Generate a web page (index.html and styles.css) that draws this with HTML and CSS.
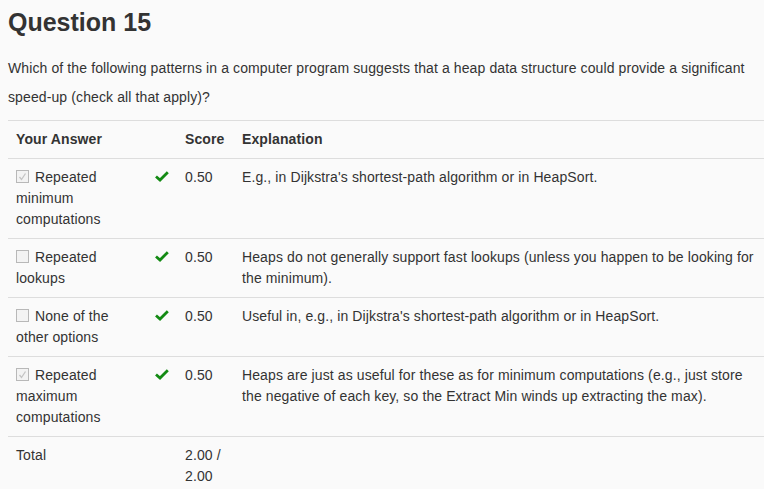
FILE: index.html
```html
<!DOCTYPE html>
<html>
<head>
<meta charset="utf-8">
<link rel="stylesheet" href="styles.css">
</head>
<body>
<div class="page">
  <h2 class="title">Question 15</h2>
  <p class="prompt">Which of the following patterns in a computer program suggests that a heap data structure could provide a significant speed-up (check all that apply)?</p>
  <table class="results">
    <colgroup>
      <col class="c-ans"><col class="c-icon"><col class="c-score"><col class="c-exp">
    </colgroup>
    <thead>
      <tr><th>Your Answer</th><th></th><th>Score</th><th>Explanation</th></tr>
    </thead>
    <tbody>
      <tr>
        <td><span class="box checked"><svg viewBox="0 0 13 13" width="13" height="13"><path d="M3.5 7 L5.5 9.5 L9.5 3.5" fill="none" stroke="#c4c4c4" stroke-width="1.3"/></svg></span>Repeated minimum computations</td>
        <td class="icon"><svg class="ok" viewBox="0 0 14 11" width="14" height="11"><path d="M1 5.5 L5 9 L12.8 1.2" fill="none" stroke="#138a13" stroke-width="2.8"/></svg></td>
        <td>0.50</td>
        <td>E.g., in Dijkstra's shortest-path algorithm or in HeapSort.</td>
      </tr>
      <tr>
        <td><span class="box"></span>Repeated lookups</td>
        <td class="icon"><svg class="ok" viewBox="0 0 14 11" width="14" height="11"><path d="M1 5.5 L5 9 L12.8 1.2" fill="none" stroke="#138a13" stroke-width="2.8"/></svg></td>
        <td>0.50</td>
        <td>Heaps do not generally support fast lookups (unless you happen to be looking for the minimum).</td>
      </tr>
      <tr>
        <td><span class="box"></span>None of the other options</td>
        <td class="icon"><svg class="ok" viewBox="0 0 14 11" width="14" height="11"><path d="M1 5.5 L5 9 L12.8 1.2" fill="none" stroke="#138a13" stroke-width="2.8"/></svg></td>
        <td>0.50</td>
        <td>Useful in, e.g., in Dijkstra's shortest-path algorithm or in HeapSort.</td>
      </tr>
      <tr>
        <td><span class="box checked"><svg viewBox="0 0 13 13" width="13" height="13"><path d="M3.5 7 L5.5 9.5 L9.5 3.5" fill="none" stroke="#c4c4c4" stroke-width="1.3"/></svg></span>Repeated maximum computations</td>
        <td class="icon"><svg class="ok" viewBox="0 0 14 11" width="14" height="11"><path d="M1 5.5 L5 9 L12.8 1.2" fill="none" stroke="#138a13" stroke-width="2.8"/></svg></td>
        <td>0.50</td>
        <td>Heaps are just as useful for these as for minimum computations (e.g., just store the negative of each key, so the Extract Min winds up extracting the max).</td>
      </tr>
      <tr>
        <td>Total</td>
        <td></td>
        <td>2.00 / 2.00</td>
        <td></td>
      </tr>
    </tbody>
  </table>
</div>
</body>
</html>
```
FILE: styles.css
```css
html, body {
  margin: 0;
  padding: 0;
  background: #fafafa;
}
body {
  font-family: "Liberation Sans", Arial, sans-serif;
  font-size: 14px;
  letter-spacing: 0.11px;
  color: #333;
  overflow: hidden;
}
.page {
  padding: 8px 0 0 8px;
}
.title {
  margin: 0 0 17px 0;
  font-size: 25px;
  line-height: 29px;
  font-weight: bold;
  letter-spacing: 0;
  color: #333;
}
.prompt {
  margin: 0 0 8px 0;
  line-height: 29px;
  padding-right: 8px;
}
.results {
  width: 756px;
  table-layout: fixed;
  border-collapse: collapse;
}
.c-ans { width: 139px; }
.c-icon { width: 30px; }
.c-score { width: 57px; }
.results th, .results td {
  padding: 8px;
  line-height: 21px;
  text-align: left;
  vertical-align: top;
  border-top: 1px solid #ddd;
}
.results th {
  font-weight: bold;
  border-bottom: 1px solid #ddd;
}
.results td.icon {
  padding-left: 8px;
  padding-top: 12px;
}
.ok { display: block; }
.box {
  display: inline-block;
  box-sizing: border-box;
  width: 13px;
  height: 13px;
  border: 1px solid #b8b8b8;
  background: #f3f3f3;
  vertical-align: -1px;
  margin-right: 6px;
  position: relative;
}
.box svg {
  position: absolute;
  left: -1px;
  top: -1px;
}
```
